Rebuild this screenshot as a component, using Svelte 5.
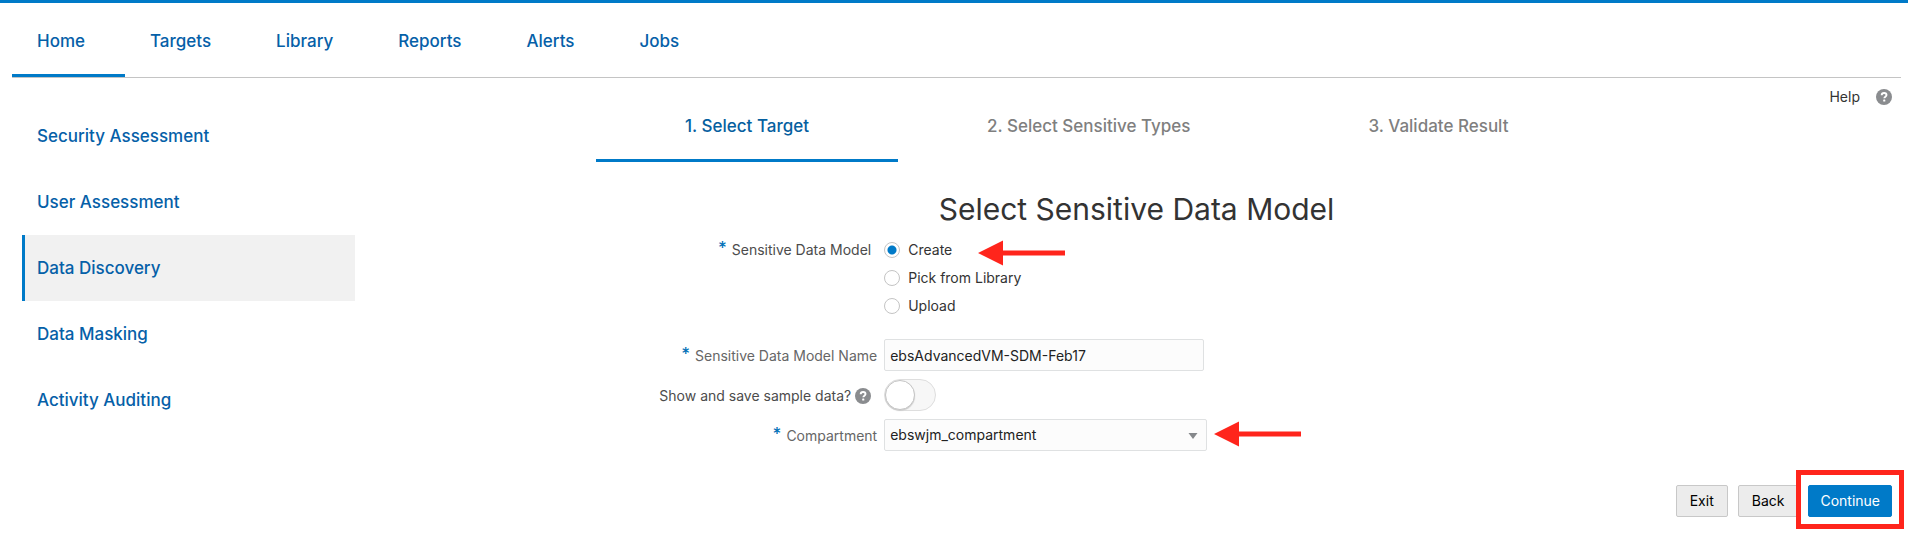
<script>
  const tabs = ['Home', 'Targets', 'Library', 'Reports', 'Alerts', 'Jobs'];
  const sections = [
    'Security Assessment',
    'User Assessment',
    'Data Discovery',
    'Data Masking',
    'Activity Auditing',
  ];
  const steps = ['1. Select Target', '2. Select Sensitive Types', '3. Validate Result'];
  const sources = ['Create', 'Pick from Library', 'Upload'];

  let activeTab = $state('Home');
  let activeSection = $state('Data Discovery');
  let activeStep = $state(steps[0]);
  let source = $state('Create');
  let modelName = $state('ebsAdvancedVM-SDM-Feb17');
  let sample = $state(false);
  let compartment = $state('ebswjm_compartment');
</script>

{#snippet helpIcon()}
  <svg class="help-icon" viewBox="0 0 16 16" width="16" height="16" aria-hidden="true">
    <circle cx="8" cy="8" r="8" fill="#8a8c8f" />
    <path
      d="M5.7 6.3C5.7 4.7 6.7 4 8.1 4c1.400 0 2.400.8 2.400 2 0 1.700-2.200 1.700-2.200 3.300"
      fill="none"
      stroke="#fff"
      stroke-width="1.900"
    />
    <rect x="7.200" y="10.500" width="2.100" height="2.100" rx=".4" fill="#fff" />
  </svg>
{/snippet}

{#snippet arrow()}
  <svg class="arrow" viewBox="0 0 88 26" width="88" height="26" aria-hidden="true">
    <path d="M0 13 25 .5V10.500H87V15.500H25V25.500Z" fill="#ff251c" />
  </svg>
{/snippet}

<div class="page">
  <nav class="tabs" aria-label="Main">
    {#each tabs as tab}
      <a href="#{tab}" class:active={tab === activeTab} onclick={() => (activeTab = tab)}>{tab}</a>
    {/each}
  </nav>

  <div class="body">
    <nav class="side" aria-label="Sections">
      {#each sections as item}
        <a
          href="#{item.replace(' ', '-')}"
          class:active={item === activeSection}
          onclick={() => (activeSection = item)}>{item}</a
        >
      {/each}
    </nav>

    <main>
      <div class="top">
        <div class="steps">
          {#each steps as step}
            <button type="button" class:active={step === activeStep} onclick={() => (activeStep = step)}
              >{step}</button
            >
          {/each}
        </div>
        <a class="help" href="#help">Help {@render helpIcon()}</a>
      </div>

      <h1>Select Sensitive Data Model</h1>

      <form onsubmit={(e) => e.preventDefault()}>
        <div class="row sources" role="radiogroup" aria-labelledby="source-label">
          <span class="label strong" id="source-label"><i>*</i>Sensitive Data Model</span>
          <div class="options">
            {#each sources as option}
              <label class="option">
                <input type="radio" name="source" value={option} bind:group={source} />
                {option}
                {#if option === 'Create'}{@render arrow()}{/if}
              </label>
            {/each}
          </div>
        </div>

        <div class="row">
          <label class="label" for="name"><i>*</i>Sensitive Data Model Name</label>
          <input id="name" class="text" type="text" bind:value={modelName} />
        </div>

        <div class="row">
          <label class="label strong" for="sample">Show and save sample data?{@render helpIcon()}</label>
          <input id="sample" class="switch" type="checkbox" role="switch" bind:checked={sample} />
        </div>

        <div class="row">
          <label class="label" for="compartment"><i>*</i>Compartment</label>
          <div class="select">
            <select id="compartment" bind:value={compartment}>
              <option>ebswjm_compartment</option>
            </select>
            <svg class="caret" viewBox="0 0 10 6" width="10" height="6" aria-hidden="true">
              <path d="M.5 0h9L5 6z" fill="#85888b" />
            </svg>
            {@render arrow()}
          </div>
        </div>

        <div class="actions">
          <button type="button">Exit</button>
          <button type="button">Back</button>
          <div class="marked"><button type="submit" class="primary">Continue</button></div>
        </div>
      </form>
    </main>
  </div>
</div>

<style>
  :global(body) {
    margin: 0;
    background: #fff;
  }
  .page {
    box-sizing: border-box;
    min-height: 100vh;
    border-top: 3px solid #007ac8;
    font: 14px/20px Inter, 'Liberation Sans', sans-serif;
    color: #333;
  }
  a {
    text-decoration: none;
    color: #0560a8;
  }
  button,
  input,
  select {
    box-sizing: border-box;
    margin: 0;
    font: inherit;
  }
  .tabs {
    display: flex;
    margin: 0 7px 0 12px;
    border-bottom: 1px solid #c4c4c4;
  }
  .tabs a {
    padding: 26px 40px 21px 25px;
    border-bottom: 3px solid transparent;
    font-size: 17px;
    font-weight: 500;
    line-height: 24px;
  }
  .tabs a.active {
    border-color: #007ac8;
  }
  .body {
    display: flex;
  }
  .side {
    display: flex;
    flex-direction: column;
    flex: 0 0 333px;
    margin: 25px 17px 0 22px;
  }
  .side a {
    padding: 0 12px;
    border-left: 3px solid transparent;
    font-size: 17px;
    font-weight: 500;
    line-height: 66px;
  }
  .side a.active {
    border-color: #007ac8;
    background: #f1f1f1;
  }
  main {
    flex: 1;
    min-width: 0;
    margin-right: 7px;
  }
  .top {
    display: flex;
    align-items: flex-start;
    justify-content: space-between;
  }
  .steps {
    display: flex;
    padding: 12px 0 0 224px;
  }
  .steps button {
    padding: 24px 89px 21px;
    border: 0;
    border-bottom: 3px solid transparent;
    background: none;
    font-size: 17px;
    font-weight: 500;
    line-height: 24px;
    white-space: nowrap;
    color: #7f7f7f;
  }
  .steps button.active {
    border-color: #007ac8;
    color: #0560a0;
  }
  .help {
    display: flex;
    align-items: center;
    gap: 16px;
    padding: 9px 9px 0 0;
    color: #333;
  }
  h1 {
    margin: 27px 0 7px;
    font-size: 30px;
    font-weight: 400;
    line-height: 40px;
    text-align: center;
  }
  form {
    display: flex;
    flex-direction: column;
    gap: 8px;
  }
  .row {
    display: grid;
    grid-template-columns: 33.5% 1fr;
  }
  .sources {
    margin-bottom: 11px;
  }
  .label {
    display: flex;
    justify-content: flex-end;
    padding: 7px 7px 0 0;
    line-height: 20px;
    color: #666;
  }
  .label.strong {
    padding: 7px 13px 0 0;
    color: #4c4c4c;
  }
  .label .help-icon {
    margin: 2px 0 0 4px;
  }
  .sources .label.strong {
    padding-top: 4px;
  }
  i {
    margin-right: 5px;
    font-size: 17px;
    font-style: normal;
    font-weight: 500;
    line-height: 16px;
    color: #0572b8;
  }
  .option {
    position: relative;
    display: flex;
    align-items: center;
    gap: 8px;
    width: 94px;
    height: 28px;
    white-space: nowrap;
  }
  .option input {
    appearance: none;
    flex: none;
    width: 16px;
    height: 16px;
    border: 1px solid #c4c4c4;
    border-radius: 50%;
    background: #fff;
  }
  .option input:checked {
    background: radial-gradient(circle, #007ac8 4px, #fff 5px);
  }
  .arrow {
    position: absolute;
    left: 100%;
    top: 4px;
  }
  .text,
  select {
    width: 320px;
    height: 32px;
    padding: 0 5px;
    border: 1px solid #dfe1e2;
    border-radius: 2px;
    background: #fcfcfc;
    color: #222;
  }
  .switch {
    appearance: none;
    display: flex;
    width: 52px;
    height: 32px;
    border: 1px solid #dedede;
    border-radius: 16px;
    background: #f7f7f7;
  }
  .switch::before {
    content: '';
    box-sizing: border-box;
    width: 30px;
    height: 30px;
    border: 1px solid #c4c4c4;
    border-radius: 50%;
    background: #fff;
    box-shadow: 0 1px 1px #ccc;
  }
  .switch:checked {
    justify-content: flex-end;
    background: #007ac8;
  }
  .select {
    position: relative;
    width: 323px;
  }
  select {
    appearance: none;
    width: 100%;
  }
  .caret {
    position: absolute;
    right: 9px;
    top: 14px;
    pointer-events: none;
  }
  .select .arrow {
    margin-left: 7px;
    top: 2px;
  }
  .actions {
    display: flex;
    justify-content: flex-end;
    gap: 10px;
    margin: 26px 9px 0 0;
  }
  .actions button {
    height: 32px;
    padding: 0 13px;
    border: 1px solid #c8c8c8;
    border-radius: 2px;
    background: #ececec;
    color: #000;
  }
  .actions button.primary {
    padding: 0 11px;
    border-color: #007ac8;
    background: #007ac8;
    color: #fff;
  }
  .marked {
    position: relative;
  }
  .marked::after {
    content: '';
    position: absolute;
    inset: -15px -12px -12px;
    border: 5px solid #ff251c;
    pointer-events: none;
  }
</style>
